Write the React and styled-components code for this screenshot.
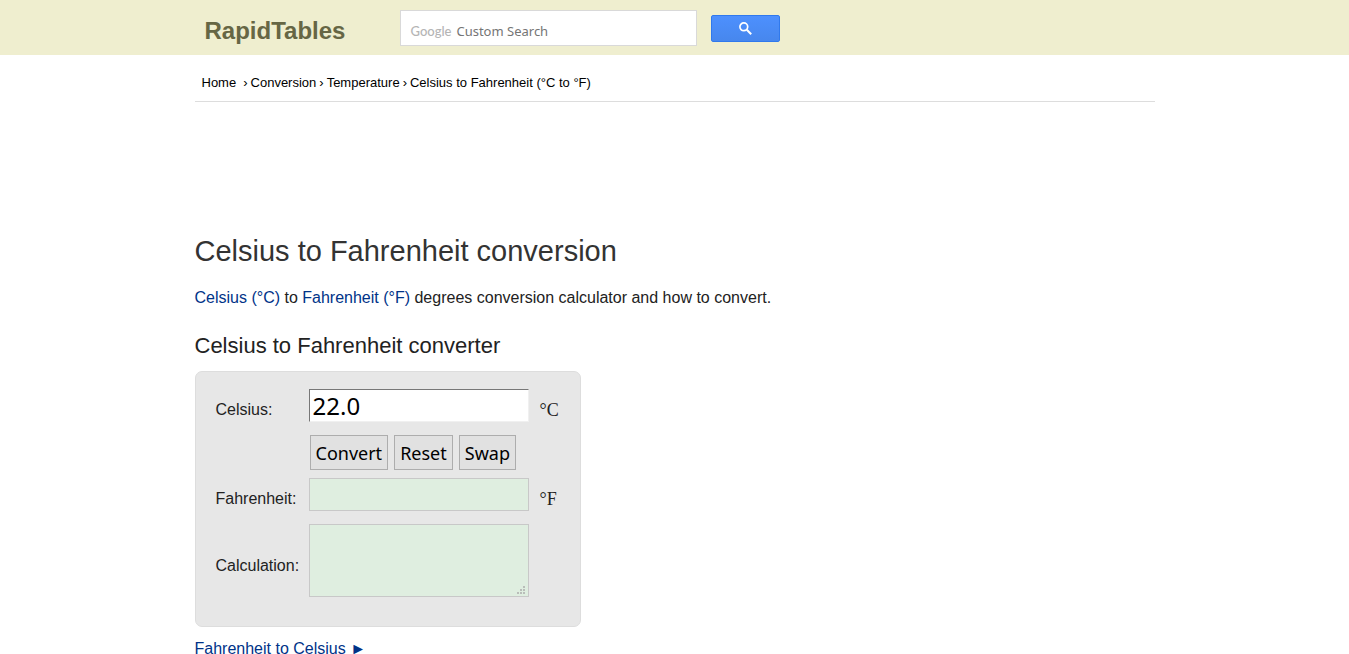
import React, { useState } from "react";
import styled, { createGlobalStyle } from "styled-components";

const GlobalStyle = createGlobalStyle`
  html {
    scrollbar-width: none;
  }
  body {
    margin: 0;
    background: #fff;
    color: #222;
    font: 16px/20px "Liberation Sans", Arial, sans-serif;
  }
  *, *::before, *::after {
    box-sizing: border-box;
  }
`;

const uiFont = `"Noto Sans", Tahoma, sans-serif`;

const Header = styled.header`
  background: #efeecf;
`;

const Container = styled.div`
  width: 100%;
  max-width: 960px;
  margin: 0 auto;
`;

const HeaderRow = styled(Container)`
  display: flex;
  align-items: flex-start;
  height: 55px;
  padding: 10px 10px 0;
`;

const Logo = styled.a`
  width: 195px;
  padding-top: 6px;
  color: #666644;
  font-size: 24px;
  font-weight: bold;
  line-height: 30px;
  text-decoration: none;
`;

const SearchForm = styled.form`
  display: flex;
  align-items: flex-start;
  gap: 14px;
`;

const SearchBox = styled.label`
  display: flex;
  align-items: center;
  gap: 5px;
  width: 297px;
  height: 36px;
  padding: 5px 10px 0;
  border: 1px solid #d9d9d9;
  background: #fff;
`;

const GoogleMark = styled.span`
  color: #b5b5b5;
  font: 500 13px/20px Lato, sans-serif;
`;

const SearchInput = styled.input`
  flex: 1;
  min-width: 0;
  padding: 0;
  border: 0;
  outline: 0;
  background: transparent;
  font: 13px/20px ${uiFont};
  &::placeholder {
    color: #757575;
    opacity: 1;
  }
`;

const SearchButton = styled.button`
  display: flex;
  align-items: center;
  justify-content: center;
  width: 69px;
  height: 27px;
  margin-top: 5px;
  padding: 0;
  border: 1px solid #3079ed;
  border-radius: 2px;
  background: linear-gradient(#4d90fe, #4787ed);
  cursor: pointer;
`;

const Breadcrumb = styled.nav`
  display: flex;
  gap: 3px;
  padding: 18px 7px 8px;
  border-bottom: 1px solid #ddd;
  color: #000;
  font-size: 13px;
  line-height: 20px;
`;

const Crumb = styled.a`
  color: #000;
  text-decoration: none;
`;

const HomeCrumb = styled(Crumb)`
  margin-right: 4px;
`;

const Main = styled.main`
  padding-top: 130px;
`;

const Title = styled.h1`
  margin: 0;
  color: #333;
  font-size: 29px;
  font-weight: normal;
  line-height: 38px;
`;

const Intro = styled.p`
  margin: 18px 0 24px;
`;

const Subtitle = styled.h2`
  margin: 0 0 11px;
  font-size: 22px;
  font-weight: normal;
  line-height: 28px;
`;

const Link = styled.a`
  color: #003388;
  text-decoration: none;
`;

const Converter = styled.form`
  width: 386px;
  max-width: 100%;
  margin-bottom: 12px;
  padding: 17px 20px 29px;
  border: 1px solid #ddd;
  border-radius: 7px;
  background: #e7e7e7;
`;

const Row = styled.div`
  display: grid;
  grid-template-columns: 93px 220px 1fr;
  align-items: ${(p) => (p.$tall ? "center" : "start")};
  margin-bottom: ${(p) => p.$gap || 0}px;
`;

const Label = styled.label`
  padding-top: ${(p) => (p.$tall ? 10 : 11)}px;
`;

const Unit = styled.span`
  padding: 10px 0 0 11px;
  font: 18px/22px "Liberation Serif", serif;
`;

const ValueInput = styled.input`
  width: 100%;
  height: 33px;
  padding: 0 3px;
  border: 1px solid #f0f0f0;
  border-top-color: #777;
  border-left-color: #777;
  background: #fff;
  color: #000;
  font: 24px/30px ${uiFont};
`;

const ResultInput = styled(ValueInput)`
  border-color: #c8c8c8;
  background: #dfeee0;
`;

const CalculationBox = styled.div`
  position: relative;
  height: 73px;
`;

const CalculationText = styled.textarea`
  display: block;
  width: 100%;
  height: 100%;
  padding: 2px;
  border: 1px solid #c8c8c8;
  background: #dfeee0;
  font: 18px/24px ${uiFont};
  resize: none;
`;

const Grip = styled.svg`
  position: absolute;
  right: 4px;
  bottom: 3px;
  fill: #b9bdb9;
  pointer-events: none;
`;

const Buttons = styled.div`
  display: flex;
  grid-column: 2 / 4;
  gap: 6px;
  padding-left: 1px;
`;

const ActionButton = styled.button`
  height: 35px;
  padding: 0 5px;
  border: 1px solid #adadad;
  background: #e1e1e1;
  color: #000;
  font: 18px/24px ${uiFont};
`;

export default function App() {
  const [celsius, setCelsius] = useState("22.0");
  const [result, setResult] = useState("");
  const [steps, setSteps] = useState("");

  const convert = (event) => {
    event.preventDefault();
    const value = parseFloat(celsius);
    if (Number.isNaN(value)) return;
    const answer = +(value * 1.8 + 32).toFixed(6);
    setResult(String(answer));
    setSteps(`(${value}°C × 9/5) + 32 = ${answer}°F`);
  };

  const reset = () => {
    setCelsius("");
    setResult("");
    setSteps("");
  };

  return (
    <>
      <GlobalStyle />
      <Header>
        <HeaderRow>
          <Logo href="#">RapidTables</Logo>
          <SearchForm onSubmit={(event) => event.preventDefault()}>
            <SearchBox>
              <GoogleMark>Google</GoogleMark>
              <SearchInput placeholder="Custom Search" aria-label="Search" />
            </SearchBox>
            <SearchButton aria-label="Search">
              <svg width="13" height="13" viewBox="0 0 13 13" fill="none" stroke="#fff">
                <circle cx="4.8" cy="4.8" r="3.9" strokeWidth="1.7" />
                <path d="M7.8 7.8 12.2 12.2" strokeWidth="2" />
              </svg>
            </SearchButton>
          </SearchForm>
        </HeaderRow>
      </Header>
      <Container>
        <Breadcrumb aria-label="Breadcrumb">
          <HomeCrumb href="#">Home</HomeCrumb>
          <span>›</span>
          <Crumb href="#">Conversion</Crumb>
          <span>›</span>
          <Crumb href="#">Temperature</Crumb>
          <span>›</span>
          <span>Celsius to Fahrenheit (°C to °F)</span>
        </Breadcrumb>
        <Main>
          <Title>Celsius to Fahrenheit conversion</Title>
          <Intro>
            <Link href="#">Celsius (°C)</Link> to <Link href="#">Fahrenheit (°F)</Link> degrees
            conversion calculator and how to convert.
          </Intro>
          <Subtitle>Celsius to Fahrenheit converter</Subtitle>
          <Converter onSubmit={convert}>
            <Row $gap={13}>
              <Label htmlFor="celsius">Celsius:</Label>
              <ValueInput
                id="celsius"
                value={celsius}
                onChange={(event) => setCelsius(event.target.value)}
              />
              <Unit>°C</Unit>
            </Row>
            <Row $gap={8}>
              <Buttons>
                <ActionButton type="submit">Convert</ActionButton>
                <ActionButton type="button" onClick={reset}>Reset</ActionButton>
                <ActionButton type="button">Swap</ActionButton>
              </Buttons>
            </Row>
            <Row $gap={13}>
              <Label htmlFor="fahrenheit">Fahrenheit:</Label>
              <ResultInput id="fahrenheit" value={result} readOnly />
              <Unit>°F</Unit>
            </Row>
            <Row $tall>
              <Label $tall htmlFor="calculation">Calculation:</Label>
              <CalculationBox>
                <CalculationText id="calculation" value={steps} readOnly />
                <Grip width="8" height="8" viewBox="0 0 8 8" shapeRendering="crispEdges" aria-hidden="true">
                  <path d="M6 0h2v2H6zM3 3h2v2H3zM6 3h2v2H6zM0 6h2v2H0zM3 6h2v2H3zM6 6h2v2H6z" />
                </Grip>
              </CalculationBox>
            </Row>
          </Converter>
          <Link href="#">Fahrenheit to Celsius ►</Link>
        </Main>
      </Container>
    </>
  );
}
